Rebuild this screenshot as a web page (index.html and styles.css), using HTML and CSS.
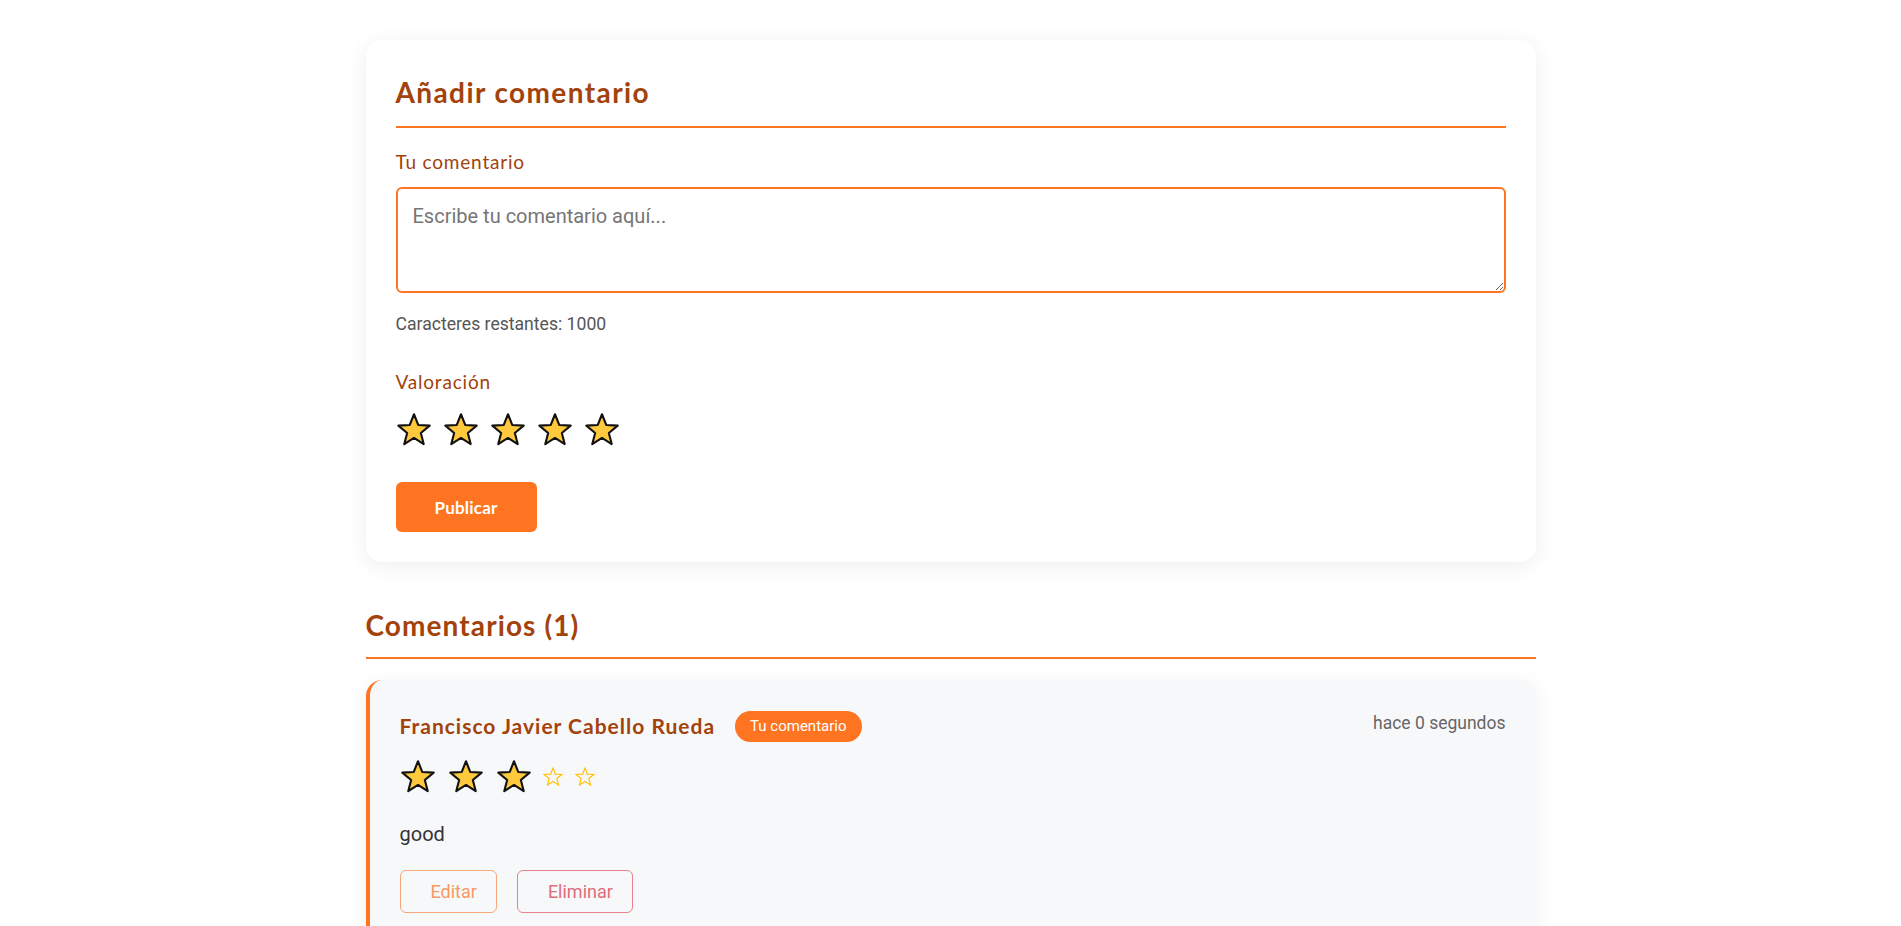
FILE: index.html
```html
<!DOCTYPE html>
<html lang="es">
<head>
<meta charset="utf-8">
<title>Comentarios</title>
<link rel="stylesheet" href="styles.css">
</head>
<body>
<main class="page">
  <section class="form-card">
    <h2 class="section-title">Añadir comentario</h2>
    <label class="field-label" for="comment">Tu comentario</label>
    <textarea id="comment" class="comment-input" placeholder="Escribe tu comentario aquí..."></textarea>
    <p class="counter">Caracteres restantes: 1000</p>
    <p class="field-label rating-label">Valoración</p>
    <div class="rating-input">
      <svg class="star" viewBox="0 0 24 24"><path d="M12 1.5L14.82 8.62 22.46 9.1 16.56 13.98 18.47 21.4 12 17.3 5.53 21.4 7.44 13.98 1.54 9.1 9.18 8.62Z"/></svg>
      <svg class="star" viewBox="0 0 24 24"><path d="M12 1.5L14.82 8.62 22.46 9.1 16.56 13.98 18.47 21.4 12 17.3 5.53 21.4 7.44 13.98 1.54 9.1 9.18 8.62Z"/></svg>
      <svg class="star" viewBox="0 0 24 24"><path d="M12 1.5L14.82 8.62 22.46 9.1 16.56 13.98 18.47 21.4 12 17.3 5.53 21.4 7.44 13.98 1.54 9.1 9.18 8.62Z"/></svg>
      <svg class="star" viewBox="0 0 24 24"><path d="M12 1.5L14.82 8.62 22.46 9.1 16.56 13.98 18.47 21.4 12 17.3 5.53 21.4 7.44 13.98 1.54 9.1 9.18 8.62Z"/></svg>
      <svg class="star" viewBox="0 0 24 24"><path d="M12 1.5L14.82 8.62 22.46 9.1 16.56 13.98 18.47 21.4 12 17.3 5.53 21.4 7.44 13.98 1.54 9.1 9.18 8.62Z"/></svg>
    </div>
    <button class="btn-primary" type="button">Publicar</button>
  </section>

  <h2 class="section-title list-title">Comentarios (1)</h2>

  <article class="comment-card">
    <div class="comment-head">
      <div class="author">
        <span class="author-name">Francisco Javier Cabello Rueda</span>
        <span class="badge">Tu comentario</span>
      </div>
      <span class="time">hace 0 segundos</span>
    </div>
    <div class="comment-stars">
      <svg class="star" viewBox="0 0 24 24"><path d="M12 1.5L14.82 8.62 22.46 9.1 16.56 13.98 18.47 21.4 12 17.3 5.53 21.4 7.44 13.98 1.54 9.1 9.18 8.62Z"/></svg>
      <svg class="star" viewBox="0 0 24 24"><path d="M12 1.5L14.82 8.62 22.46 9.1 16.56 13.98 18.47 21.4 12 17.3 5.53 21.4 7.44 13.98 1.54 9.1 9.18 8.62Z"/></svg>
      <svg class="star" viewBox="0 0 24 24"><path d="M12 1.5L14.82 8.62 22.46 9.1 16.56 13.98 18.47 21.4 12 17.3 5.53 21.4 7.44 13.98 1.54 9.1 9.18 8.62Z"/></svg>
      <svg class="star-empty" viewBox="0 0 24 24"><path d="M12 2.2l2.6 6.6 7.1.4-5.5 4.5 1.8 6.9L12 16.8l-6 3.8 1.8-6.9-5.5-4.5 7.1-.4z"/></svg>
      <svg class="star-empty" viewBox="0 0 24 24"><path d="M12 2.2l2.6 6.6 7.1.4-5.5 4.5 1.8 6.9L12 16.8l-6 3.8 1.8-6.9-5.5-4.5 7.1-.4z"/></svg>
    </div>
    <p class="comment-text">good</p>
    <div class="comment-actions">
      <button class="btn-outline btn-edit" type="button">Editar</button>
      <button class="btn-outline btn-delete" type="button">Eliminar</button>
    </div>
  </article>
</main>
</body>
</html>
```

FILE: styles.css
```css
html, body {
  margin: 0;
  padding: 0;
  background: #ffffff;
}

body {
  font-family: Roboto, "Liberation Sans", sans-serif;
  color: #333333;
}

.page {
  width: 1170px;
  margin: 0 auto;
  padding-top: 40px;
}

.form-card {
  background: #ffffff;
  border-radius: 16px;
  padding: 30px;
  box-shadow: 0 4px 22px rgba(0, 0, 0, 0.07);
  display: flex;
  flex-direction: column;
  align-items: flex-start;
}

.section-title {
  align-self: stretch;
  margin: 0 0 20px 0;
  font-family: Lato, "Open Sans", sans-serif;
  font-weight: 700;
  font-size: 28px;
  letter-spacing: 1.4px;
  line-height: 44px;
  color: #a3420b;
  padding-bottom: 12px;
  border-bottom: 2px solid #ff7420;
}

.list-title {
  margin: 41px 0 21px 0;
  padding-bottom: 10px;
  letter-spacing: 1.1px;
}

.field-label {
  display: block;
  margin: 0 0 12px 0;
  font-family: Lato, "Open Sans", sans-serif;
  font-size: 19px;
  letter-spacing: 0.8px;
  line-height: 27px;
  color: #a3420b;
}

.comment-input {
  align-self: stretch;
  box-sizing: border-box;
  height: 106px;
  margin: 0;
  padding: 14px 15px;
  border: 2px solid #ff7420;
  border-radius: 6px;
  font-family: Roboto, "Liberation Sans", sans-serif;
  font-size: 20px;
  line-height: 26px;
  color: #333;
  resize: vertical;
  outline: none;
}

.comment-input::placeholder {
  color: #757575;
}

.counter {
  margin: 19px 0 0 0;
  font-size: 17.6px;
  line-height: 24px;
  color: #555555;
}

.rating-label {
  margin-top: 32px;
  margin-bottom: 17px;
}

.rating-input {
  display: flex;
  gap: 11px;
}

.star {
  width: 36px;
  height: 36px;
  display: block;
}

.star path {
  fill: #ffc83d;
  stroke: #111111;
  stroke-width: 1.4;
  stroke-linejoin: round;
}

.star-empty {
  width: 22px;
  height: 22px;
  display: block;
  margin-left: -2px;
}

.star-empty path {
  fill: none;
  stroke: #ffc107;
  stroke-width: 1.3;
  stroke-linejoin: miter;
}

.btn-primary {
  margin-top: 34px;
  width: 141px;
  height: 50px;
  border: none;
  border-radius: 6px;
  background: #ff7420;
  color: #ffffff;
  font-family: Lato, "Open Sans", sans-serif;
  font-weight: 700;
  font-size: 17px;
  letter-spacing: 0.2px;
  cursor: pointer;
}

.comment-card {
  background: #f7f8fa;
  border-left: 4px solid #ff7420;
  border-radius: 16px;
  padding: 30px;
  box-shadow: 0 4px 22px rgba(0, 0, 0, 0.06);
}

.comment-head {
  display: flex;
  justify-content: space-between;
  align-items: flex-start;
}

.author {
  display: flex;
  align-items: center;
  gap: 20px;
}

.author-name {
  font-family: Lato, "Open Sans", sans-serif;
  font-weight: 700;
  font-size: 21px;
  letter-spacing: 1px;
  line-height: 32px;
  color: #a3420b;
}

.badge {
  background: #ff7420;
  color: #ffffff;
  font-size: 15px;
  line-height: 19px;
  padding: 6px 15px;
  border-radius: 16px;
}

.time {
  font-size: 17.5px;
  line-height: 24px;
  color: #666666;
  margin-top: 1px;
}

.comment-stars {
  display: flex;
  align-items: center;
  gap: 12px;
  margin-top: 17px;
}

.comment-text {
  margin: 24px 0 0 0;
  font-size: 20px;
  line-height: 30px;
  color: #333333;
}

.comment-actions {
  display: flex;
  gap: 20px;
  margin-top: 21px;
}

.btn-outline {
  height: 43px;
  padding: 0 19px 0 30px;
  background: transparent;
  border-radius: 6px;
  font-family: Roboto, "Liberation Sans", sans-serif;
  font-size: 18px;
  cursor: pointer;
}

.btn-edit {
  border: 1px solid #f7a778;
  color: #f79a62;
}

.btn-delete {
  border: 1px solid #e5828c;
  color: #e06d79;
}
```
